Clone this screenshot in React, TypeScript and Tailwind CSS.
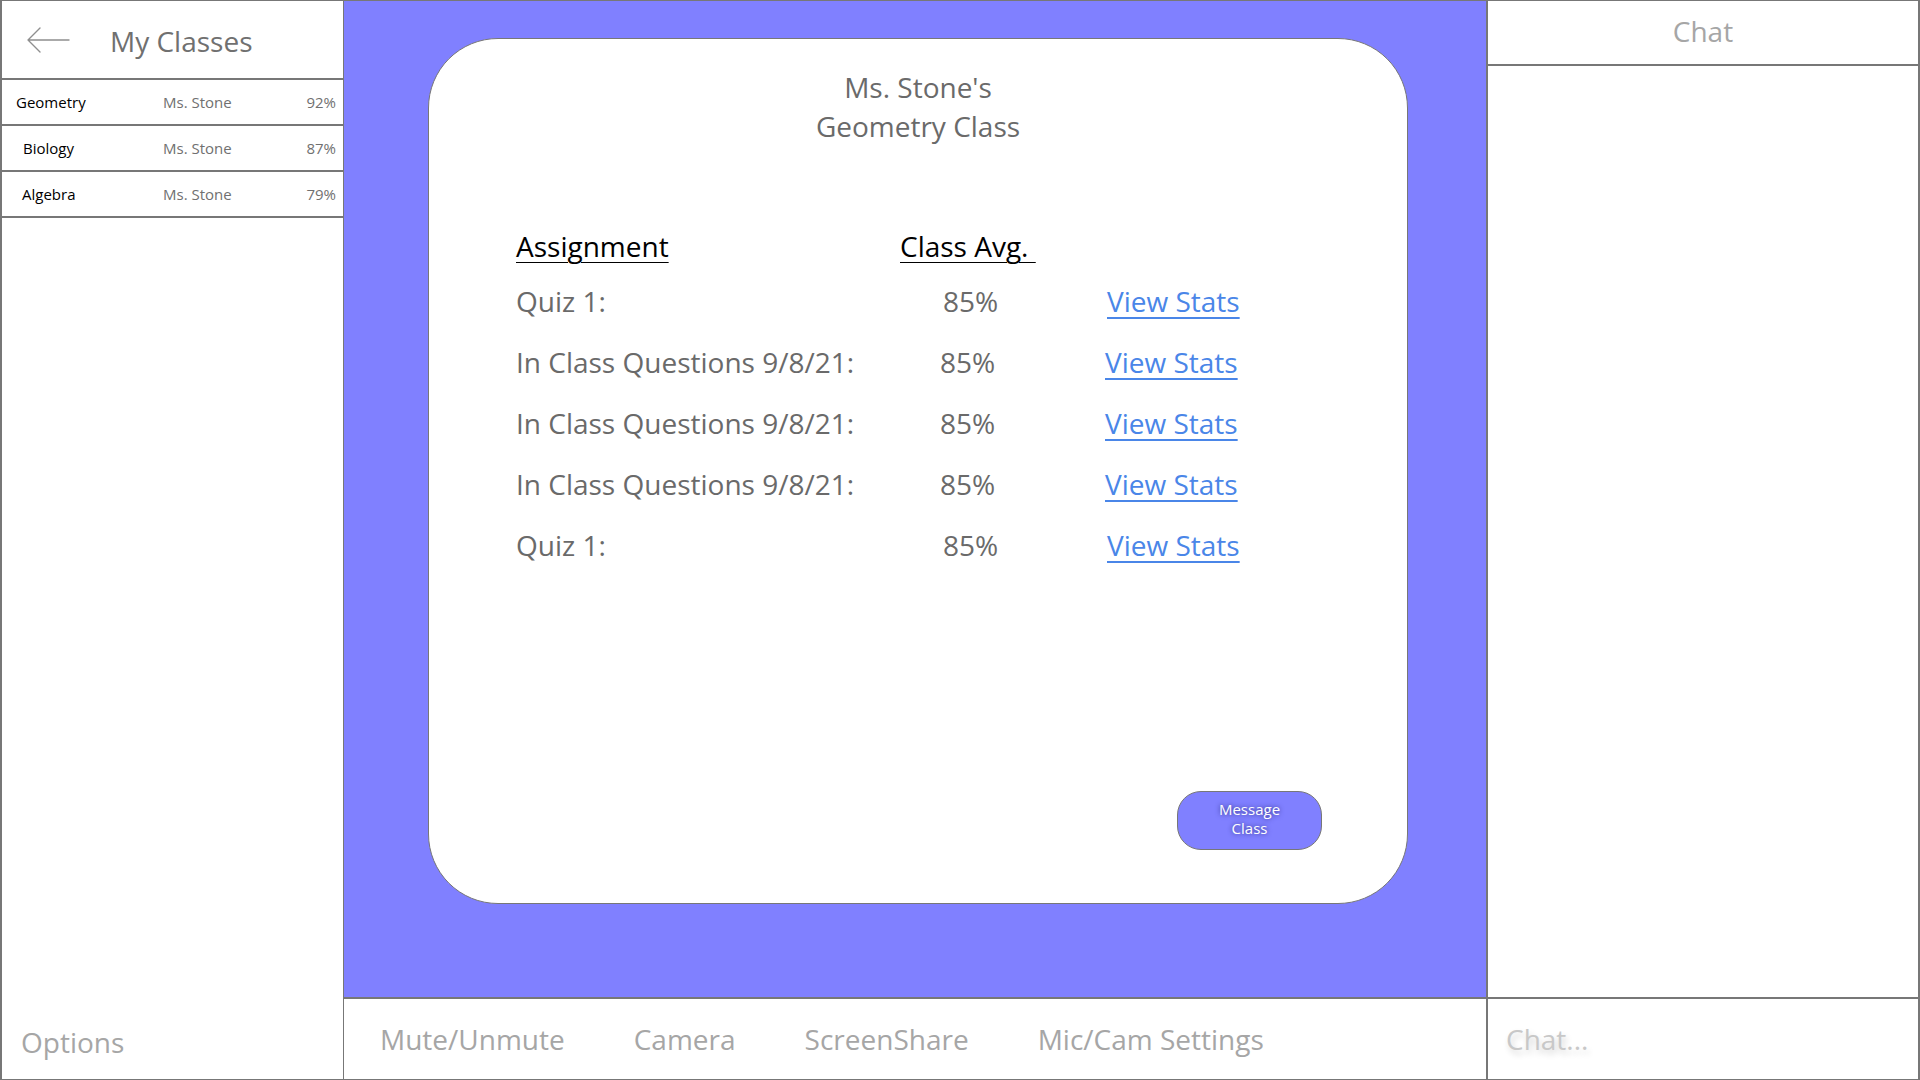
const classes = [
  { name: "Geometry", teacher: "Ms. Stone", grade: "92%", indent: "pl-[14px]" },
  { name: "Biology", teacher: "Ms. Stone", grade: "87%", indent: "pl-[21px]" },
  { name: "Algebra", teacher: "Ms. Stone", grade: "79%", indent: "pl-[20px]" },
];

const assignments = [
  { title: "Quiz 1:", avg: "85%", shift: "pl-[43px]", link: "pl-[2px]" },
  { title: "In Class Questions 9/8/21:", avg: "85%", shift: "pl-[40px]", link: "" },
  { title: "In Class Questions 9/8/21:", avg: "85%", shift: "pl-[40px]", link: "" },
  { title: "In Class Questions 9/8/21:", avg: "85%", shift: "pl-[40px]", link: "" },
  { title: "Quiz 1:", avg: "85%", shift: "pl-[43px]", link: "pl-[2px]" },
];

const controls = ["Mute/Unmute", "Camera", "ScreenShare", "Mic/Cam Settings"];

function BackArrow() {
  return (
    <svg width="44" height="28" viewBox="0 0 44 28" fill="none">
      <path
        d="M43 14H2M14 2L2 14L14 26"
        stroke="#8f8f8f"
        strokeWidth="1.4"
        strokeLinecap="round"
        strokeLinejoin="round"
      />
    </svg>
  );
}

export default function App() {
  return (
    <div
      className="w-[1920px] h-[1080px] flex bg-white border-t border-b border-[#777] overflow-hidden"
      style={{ fontFamily: '"Segoe UI", "Open Sans", "Noto Sans", sans-serif' }}
    >
      {/* class list */}
      <aside className="w-[344px] shrink-0 flex flex-col border-l-2 border-r border-[#777]">
        <div className="h-[79px] shrink-0 flex items-center border-b-2 border-[#777] pl-[24px]">
          <BackArrow />
          <span className="ml-[40px] text-[28px] text-[#707070] leading-none pt-[2px]">My Classes</span>
        </div>
        {classes.map((c) => (
          <div
            key={c.name}
            className="h-[46px] shrink-0 flex items-center border-b-2 border-[#777] text-[15px] pr-[7px]"
          >
            <span className={`w-[161px] text-black ${c.indent}`}>{c.name}</span>
            <span className="flex-1 text-[#707070]">{c.teacher}</span>
            <span className="text-[#707070]">{c.grade}</span>
          </div>
        ))}
        <div className="flex-1" />
        <div className="h-[82px] shrink-0 flex items-center pl-[19px] pt-[8px] text-[28px] text-[#a6a6a6]">
          Options
        </div>
      </aside>

      {/* class view */}
      <main className="w-[1142px] shrink-0 flex flex-col">
        <section className="flex-1 bg-[#8080ff] pt-[37px] pl-[84px]">
          <div className="w-[980px] h-[866px] bg-white border border-[#777] rounded-[70px] flex flex-col">
            <div className="pt-[29px] text-center text-[28px] leading-[39px] text-[#6a6a6a]">
              <div>Ms. Stone's</div>
              <div>Geometry Class</div>
            </div>

            <div className="mt-[76px] pl-[87px] text-[28px]">
              <div className="h-[48px] flex items-center text-black">
                <span className="w-[384px] underline underline-offset-[5px] decoration-1">Assignment</span>
                <span className="underline underline-offset-[5px] decoration-1">Class Avg.&nbsp;</span>
              </div>
              {assignments.map((a, i) => (
                <div key={i} className="h-[61px] flex items-center text-[#6a6a6a]">
                  <span className="w-[384px]">{a.title}</span>
                  <span className={`w-[205px] ${a.shift}`}>{a.avg}</span>
                  <a
                    href="#"
                    className={`text-[#4a86e8] underline underline-offset-[5px] decoration-[1.5px] ${a.link}`}
                  >
                    View Stats
                  </a>
                </div>
              ))}
            </div>

            <button className="mt-auto self-end mr-[85px] mb-[53px] w-[145px] h-[59px] rounded-[24px] bg-[#8080ff] border border-[#777] text-white text-[15px] leading-[19px] pb-[3px] [text-shadow:0_0_5px_#2e2e80]">
              Message
              <br />
              Class
            </button>
          </div>
        </section>
        <div className="h-[82px] shrink-0 border-t-2 border-[#777] flex items-center pl-[36px] gap-[69px] text-[28px] text-[#a6a6a6]">
          {controls.map((c) => (
            <span key={c}>{c}</span>
          ))}
        </div>
      </main>

      {/* chat */}
      <aside className="flex-1 flex flex-col border-l-2 border-r-2 border-[#777]">
        <div className="h-[65px] shrink-0 border-b-2 border-[#777] flex items-center justify-center pb-[3px] text-[28px] text-[#a6a6a6]">
          Chat
        </div>
        <div className="flex-1" />
        <div className="h-[82px] shrink-0 border-t-2 border-[#777] flex items-center pl-[18px] text-[28px] text-[#c8c8c8] [text-shadow:2px_4px_6px_rgba(0,0,0,0.18)]">
          Chat...
        </div>
      </aside>
    </div>
  );
}
